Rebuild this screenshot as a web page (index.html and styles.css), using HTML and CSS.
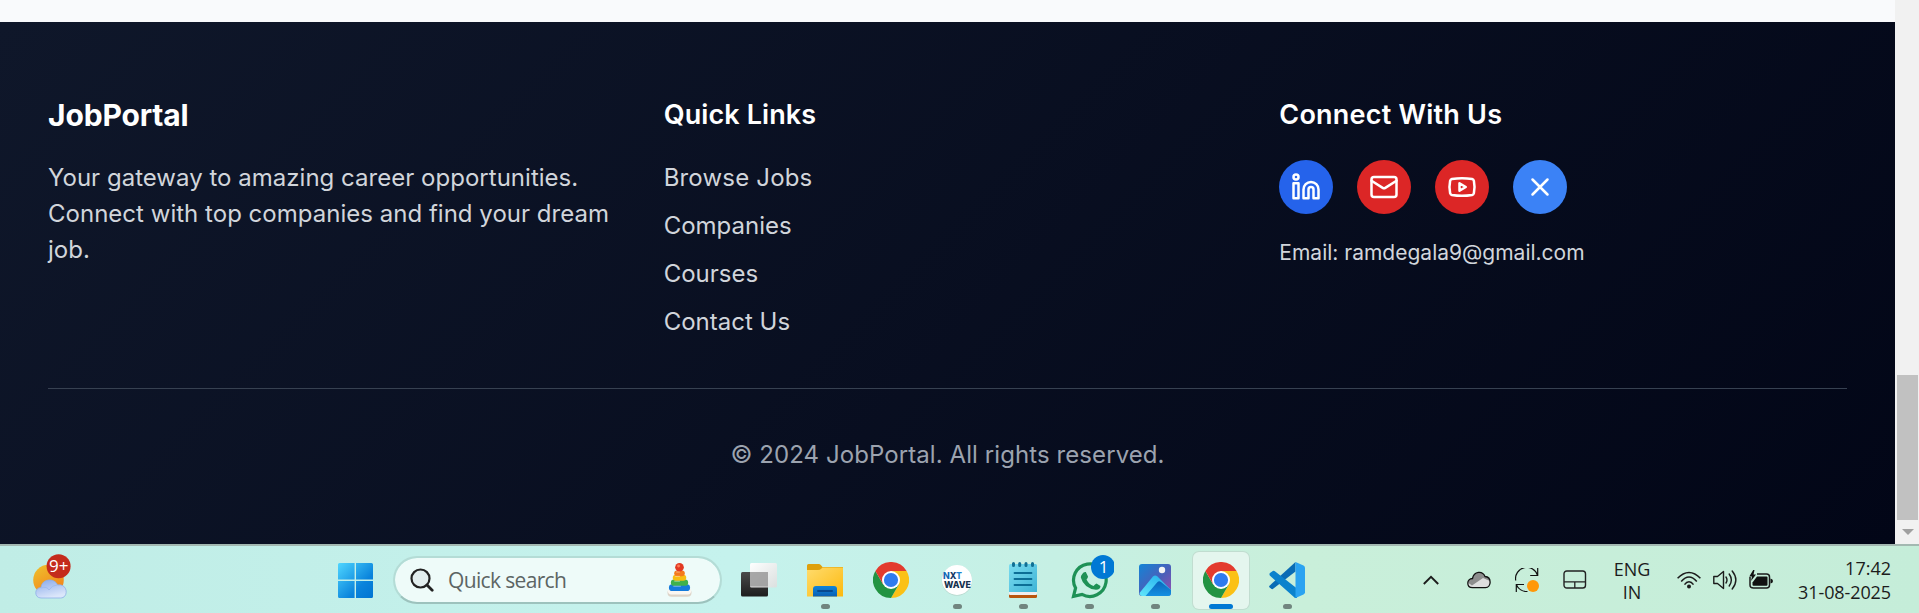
FILE: index.html
```html
<!DOCTYPE html>
<html lang="en">
<head>
<meta charset="utf-8">
<title>JobPortal</title>
<link rel="stylesheet" href="styles.css">
</head>
<body>
<svg class="defs" width="0" height="0" aria-hidden="true">
  <defs>
    <linearGradient id="sun" x1="0" y1="0" x2=".6" y2="1"><stop offset="0" stop-color="#eec32e"/><stop offset="1" stop-color="#f3831a"/></linearGradient>
    <linearGradient id="cloud" x1="0" y1="0" x2=".4" y2="1"><stop offset="0" stop-color="#88a9ea"/><stop offset="1" stop-color="#dbe6fa"/></linearGradient>
    <linearGradient id="win" gradientUnits="userSpaceOnUse" x1="0" y1="0" x2="35" y2="35"><stop offset="0" stop-color="#4fd6ff"/><stop offset=".65" stop-color="#0a84dc"/><stop offset="1" stop-color="#0074d2"/></linearGradient>
    <linearGradient id="dark" x1="0" y1="0" x2="0" y2="1"><stop offset="0" stop-color="#4a4a4a"/><stop offset="1" stop-color="#1d1d1d"/></linearGradient>
    <linearGradient id="light" x1="0" y1="0" x2="1" y2="1"><stop offset="0" stop-color="#fff" stop-opacity=".98"/><stop offset="1" stop-color="#dedede" stop-opacity=".9"/></linearGradient>
    <linearGradient id="folder" x1="0" y1="0" x2="1" y2="1"><stop offset="0" stop-color="#ffdc6e"/><stop offset="1" stop-color="#fcb90f"/></linearGradient>
    <linearGradient id="folderfront" x1="0" y1="0" x2="0" y2="1"><stop offset="0" stop-color="#0f84d8"/><stop offset="1" stop-color="#0a5fb2"/></linearGradient>
    <linearGradient id="note" x1="0" y1="0" x2="1" y2="1"><stop offset="0" stop-color="#7adcf0"/><stop offset="1" stop-color="#3fb4d6"/></linearGradient>
    <linearGradient id="sky" x1="0" y1="0" x2="1" y2="1"><stop offset="0" stop-color="#1384d6"/><stop offset=".55" stop-color="#4b5fb9"/><stop offset="1" stop-color="#9a4db0"/></linearGradient>
    <linearGradient id="hill" x1="0" y1="1" x2=".7" y2="0"><stop offset="0" stop-color="#62e6fb"/><stop offset="1" stop-color="#27b4ee"/></linearGradient>
    <linearGradient id="hill2" x1="0" y1="0" x2="0" y2="1"><stop offset="0" stop-color="#0a67bb"/><stop offset="1" stop-color="#1490e2"/></linearGradient>
    <symbol id="chrome" viewBox="0 0 36 36">
      <path fill="#fbc116" d="M18 9H33.6A18 18 0 0 1 18 36L25.8 22.5Z"/>
      <path fill="#229342" d="M18 36A18 18 0 0 1 2.4 9L10.2 22.5H25.8Z"/>
      <path fill="#e33b2e" d="M2.4 9A18 18 0 0 1 33.6 9H18L10.2 22.5Z"/>
      <circle cx="18" cy="18" r="9" fill="#fff"/><circle cx="18" cy="18" r="7.1" fill="#2f7bee"/>
    </symbol>
  </defs>
</svg>

<div class="viewport">
  <div class="page">
    <footer class="footer">
      <div class="columns">
        <section>
          <h3 class="brand">JobPortal</h3>
          <p class="about">Your gateway to amazing career opportunities. Connect with top companies and find your dream job.</p>
        </section>
        <section>
          <h4 class="heading">Quick Links</h4>
          <ul class="links">
            <li class="browse">Browse Jobs</li><li>Companies</li><li>Courses</li><li>Contact Us</li>
          </ul>
        </section>
        <section>
          <h4 class="heading heading-connect">Connect With Us</h4>
          <div class="social">
            <span class="dot blue"><svg viewBox="0 0 24 24"><path d="M16 8a6 6 0 0 1 6 6v7h-4v-7a2 2 0 0 0-4 0v7h-4v-7a6 6 0 0 1 6-6z"/><rect x="2" y="9" width="4" height="12"/><circle cx="4" cy="4" r="2"/></svg></span>
            <span class="dot red"><svg viewBox="0 0 24 24"><rect x="2" y="4" width="20" height="16" rx="2"/><path d="m22 7-8.97 5.7a1.94 1.94 0 0 1-2.06 0L2 7"/></svg></span>
            <span class="dot red"><svg viewBox="0 0 24 24"><path d="M2.5 17a24.12 24.12 0 0 1 0-10 2 2 0 0 1 1.4-1.4 49.56 49.56 0 0 1 16.2 0A2 2 0 0 1 21.5 7a24.12 24.12 0 0 1 0 10 2 2 0 0 1-1.4 1.4 49.55 49.55 0 0 1-16.2 0A2 2 0 0 1 2.5 17"/><path d="m10 15 5-3-5-3z"/></svg></span>
            <span class="dot sky"><svg viewBox="0 0 24 24"><path d="M18 6 6 18M6 6l12 12"/></svg></span>
          </div>
          <p class="email">Email: ramdegala9@gmail.com</p>
        </section>
      </div>
      <div class="legal">© 2024 JobPortal. All rights reserved.</div>
    </footer>
  </div>
  <div class="scrollbar"><div class="thumb"></div><svg class="arrow" viewBox="0 0 12 6"><path d="M0 0H12L6 6Z" fill="#a0a0a0"/></svg></div>
</div>

<div class="taskbar">
  <svg class="weather" viewBox="0 0 40 48">
    <circle cx="15.5" cy="26" r="15.3" fill="url(#sun)"/>
    <path d="M8 44C1 44 1 33.500 8 33.500C9 24 22 24 24.500 31C35 29 36 44 27.500 44Z" fill="url(#cloud)" stroke="#8eaee9" stroke-width=".8"/>
    <path d="M8 34Q14 32 16 36Q19 31 24 31" fill="none" stroke="#9bb7ee" stroke-width=".8"/>
    <circle cx="25.600" cy="12.300" r="12" fill="#c42b1c"/>
    <text x="25.700" y="18" class="badge-text">9+</text>
  </svg>
  <svg class="start" viewBox="0 0 35 35"><path fill="url(#win)" d="M1.500 0H16.600V16.600H0V1.500Q0 0 1.500 0ZM18 0H33.500Q35 0 35 1.500V16.600H18ZM0 18H16.600V35H1.500Q0 35 0 33.500ZM18 18H35V33.500Q35 35 33.500 35H18Z"/></svg>
  <div class="search">
    <svg class="glass" viewBox="0 0 24 24"><circle cx="10.500" cy="10.500" r="9" fill="#e2eeee" stroke="#222" stroke-width="2.200"/><path d="M17 17L22.200 22.200" stroke="#222" stroke-width="2.800" stroke-linecap="round"/></svg>
    <span class="search-text">Quick search</span>
    <svg class="toy" viewBox="0 0 26 36">
      <rect x=".5" y="27" width="25" height="8.500" rx="4.200" fill="#ddd4c8"/><rect x="1" y="26.500" width="24" height="6.500" rx="3.200" fill="#fbf7f2"/>
      <rect x="2" y="22.500" width="22" height="7" rx="3.500" fill="#157bdc"/>
      <rect x="4" y="17.500" width="18" height="6.500" rx="3.200" fill="#3fb14c"/>
      <rect x="6" y="12.500" width="14" height="6.300" rx="3.100" fill="#f7bd12"/>
      <rect x="7.500" y="8" width="11" height="6" rx="3" fill="#f47a1c"/>
      <circle cx="13" cy="4.700" r="4.500" fill="#e23a23"/><circle cx="12" cy="3.500" r="1.500" fill="#ff7b57"/>
      <path d="M7 24.500h7M8 19.300h5M9 14.200h4M10 9.700h3" stroke="#fff" stroke-opacity=".45" stroke-linecap="round"/>
    </svg>
  </div>
  <div class="apps">
    <div class="app"><svg viewBox="0 0 36 36"><rect x="0" y="10" width="27" height="24.500" rx="1.500" fill="url(#dark)"/><rect x="9" y="1" width="27" height="24.500" rx="1.500" fill="url(#light)"/><path d="M9 10H27V24.500H9Z" fill="#9a9a9a" fill-opacity=".85"/></svg></div>
    <div class="app running"><svg viewBox="0 0 36 36"><path d="M0 3.500Q0 2 1.500 2H11.500Q13 2 14 3.300L15.500 5H36V9H0Z" fill="#dfa00c"/><path d="M0 8H11Q13 8 14.500 6.500L15.500 5.500H36V34.500H0Z" fill="url(#folder)"/><path d="M6 34.500V27Q6 24 9 24H27Q30 24 30 27V34.500Z" fill="url(#folderfront)"/><path d="M11 29H25" stroke="#07498f" stroke-width="2" stroke-linecap="round"/></svg></div>
    <div class="app"><svg><use href="#chrome"/></svg></div>
    <div class="app running"><svg viewBox="0 0 36 36"><circle cx="18" cy="18.500" r="15.200" fill="#b8d8ce"/><circle cx="18" cy="18" r="15" fill="#fff"/><text x="4" y="17" class="nxt" textLength="19" lengthAdjust="spacingAndGlyphs"><tspan fill="#1268b5">N</tspan><tspan fill="#173a66">X</tspan><tspan fill="#1c83cf">T</tspan></text><text x="5" y="26.200" class="wave" textLength="27" lengthAdjust="spacingAndGlyphs">WAVE</text></svg></div>
    <div class="app running"><svg viewBox="0 0 36 36"><rect x="4" y="29" width="28" height="7" rx="1.500" fill="#b9560e"/><rect x="4" y="28" width="28" height="5" rx="1" fill="#f0eeee"/><path d="M5.500 2H30.500Q32 2 32 3.500V30H4V3.500Q4 2 5.500 2Z" fill="url(#note)"/><path d="M9.500 11H26.500M9.500 17H26.500M9.500 23H26.500" stroke="#0c6e96" stroke-width="1.800" stroke-linecap="round"/><path d="M8.500 1.500V3.500M14.700 1.500V3.500M21 1.500V3.500M27.500 1.500V3.500" stroke="#126f94" stroke-width="3" stroke-linecap="round"/></svg></div>
    <div class="app running"><svg class="wa" viewBox="0 0 44 46"><path d="M3.500 43.400L5.600 35A16.300 16.300 0 1 1 12 41.400Z" fill="none" stroke="#1e9156" stroke-width="3.200"/><path d="M12 21.500Q13 18.500 15.800 19L18 23.500Q18 25 16.500 26.500Q19 31.500 23.500 33Q25 31 26.500 30.500L30.500 33Q30.500 36.500 26 36.800Q14 35.500 10.800 24.500Q10.800 22.500 12 21.500Z" fill="#1e9156"/><circle cx="33" cy="14" r="12" fill="#0078d4"/><text x="33.500" y="20" class="badge-text">1</text></svg></div>
    <div class="app running"><svg viewBox="0 0 36 36"><rect x="2" y="2" width="32" height="32" rx="3" fill="url(#sky)"/><path d="M2.500 31L16 14.500Q18 12.500 20.500 14.500L33.500 27.500V31Q33.500 34 31 34H5Q3 34 2.500 31Z" fill="url(#hill)"/><path d="M9 33.500L20.500 20Q22 18.500 24 20L34 28V31Q34 34 31 34H8.500Z" fill="url(#hill2)"/><circle cx="25" cy="8" r="3.200" fill="#f3f3f5"/></svg></div>
    <div class="app active"><svg><use href="#chrome"/></svg></div>
    <div class="app running"><svg viewBox="0 0 36 36"><path d="M26.500 0L0 24.200Q0 26 3.500 27.200L26.500 9.500Z" fill="#0a6cb5"/><path d="M1 11L3.800 9Q5 8.500 6.200 9.500L28 26.500V36H26L.800 13.500Q0 12 1 11Z" fill="#0b82cd"/><path d="M26.500 0L34.500 3.500Q36 4.200 36 5.800V30.200Q36 31.800 34.500 32.500L26.500 36Z" fill="#2ba3f1"/></svg></div>
  </div>
  <div class="tray">
    <svg class="chev" viewBox="0 0 16 10"><path d="M.8 9L8 1.800L15.200 9" fill="none" stroke="#1c1c1c" stroke-width="1.900"/></svg>
    <svg class="drive" viewBox="0 0 24 18"><path d="M5.500 16.700C-1 16.500-.5 7.500 5.500 7.500C7 0 15.500-.5 18 5.500C25 6 24.500 16.500 18.500 16.700Z" fill="#dedede"/><path d="M1.500 12Q1 8 5.500 7.500C7 0 15.500-.5 18 5.500Q22 6 22.800 10L16 7L5 14.500Z" fill="#8d8d8d"/><path d="M5.500 16.700C-1 16.500-.5 7.500 5.500 7.500C7 0 15.500-.5 18 5.500C25 6 24.500 16.500 18.500 16.700Z" fill="none" stroke="#111" stroke-width="1.300"/></svg>
    <svg class="sync" viewBox="0 0 24 24"><path d="M.7 12.500A11.300 11.300 0 0 1 22.700 7.500M22.700 0V7.500H15.200M12.500 23.500A11.300 11.300 0 0 1 1.300 16.500M9 16.500H1.300V24" fill="none" stroke="#111" stroke-width="1.200"/><circle cx="18" cy="18" r="6" fill="#ff9808"/></svg>
    <svg class="pad" viewBox="0 0 24 20"><rect x="1" y="1" width="21.500" height="17" rx="2.800" fill="none" stroke="#222" stroke-width="1.400"/><path d="M1 11.800H22.500M11.800 11.800V18" stroke="#222" stroke-width="1.300"/></svg>
    <div class="lang">ENG<br>IN</div>
    <svg class="wifi" viewBox="0 0 24 18"><g fill="none" stroke="#1c1c1c" stroke-width="1.500"><path d="M.6 7.200Q6 1.400 12 1.400T23.400 7.200"/><path d="M4.200 10.500Q8 6 12 6T19.800 10.500"/><path d="M7.500 13.700Q9.500 10.700 12 10.700T16.500 13.700"/></g><circle cx="12" cy="15.500" r="2" fill="#1c1c1c"/></svg>
    <svg class="speaker" viewBox="0 0 24 20"><g fill="none" stroke="#1c1c1c" stroke-width="1.400" stroke-linejoin="round"><path d="M.8 6.500H4.500L10.500 1.500V18.500L4.500 13.500H.8Z"/><path d="M13 7Q15 10 13 13M16.200 4Q20.500 10 16.200 16M19.200 1Q26.500 10 19.200 19" stroke-linecap="round"/></g></svg>
    <svg class="battery" viewBox="0 0 24 20"><path d="M8 4H17.500Q20.500 4 20.500 7V15Q20.500 18 17.500 18H4.500Q1 18 1 15V7" fill="none" stroke="#1c1c1c" stroke-width="1.500"/><path d="M8 6.500H17.500Q18.500 6.500 18.500 7.500V14.500Q18.500 15.700 17.500 15.700H4.500Q3.500 15.700 3.500 14.500V12.500Z" fill="#111"/><path d="M21.500 8.500Q24 9 24 11T21.500 13.500Z" fill="#111"/><path d="M4.200 0L.3 6.500H3L2 11L7 4.500H4.500L5.500 0Z" fill="#111"/></svg>
    <div class="clock"><span class="time">17:42</span><span class="date">31-08-2025</span></div>
  </div>
</div>
</body>
</html>
```
FILE: styles.css
```css
* { box-sizing: border-box; margin: 0; padding: 0; }
body { width: 1919px; height: 613px; overflow: hidden; background: #f9fafb; font-family: Inter, sans-serif; }
svg { display: block; flex: none; }
.defs { position: absolute; }

.viewport { display: flex; height: 544px; overflow: hidden; }
.page { width: 1895px; padding-top: 22px; background: #f9fafc; }
.footer { height: 523px; padding: 72px 48px; background: linear-gradient(135deg, #0f172a, #020617); color: #fff; }
.columns { display: grid; grid-template-columns: repeat(3, 1fr); gap: 48px; }
.brand { font-size: 30px; line-height: 42px; font-weight: 700; letter-spacing: -.15px; }
.heading { font-size: 27px; line-height: 42px; font-weight: 600; letter-spacing: .1px; }
.heading-connect { letter-spacing: .22px; }
.about { margin-top: 24px; letter-spacing: .02px; }
.about, .links, .legal { font-size: 24px; line-height: 36px; color: #d1d5db; }
.links { margin-top: 24px; display: grid; gap: 12px; list-style: none; }
.browse { letter-spacing: .18px; }
.social { display: flex; gap: 24px; margin-top: 24px; }
.dot { display: grid; place-items: center; width: 54px; height: 54px; border-radius: 50%; }
.dot svg { width: 30px; height: 30px; fill: none; stroke: #fff; stroke-width: 2; stroke-linecap: round; stroke-linejoin: round; }
.blue { background: #2563eb; }
.red { background: #dc2626; }
.sky { background: #3b82f6; }
.email { margin-top: 24px; font-size: 21px; line-height: 30px; color: #d1d5db; }
.legal { margin-top: 48px; padding-top: 48px; border-top: 1px solid #374151; text-align: center; color: #9ca3af; letter-spacing: .08px; }

.scrollbar { width: 24px; padding: 375px 1px 0 2px; background: #f1f1f1; }
.thumb { height: 145px; background: #c1c1c1; }
.arrow { width: 12px; height: 6px; margin: 9px auto 0; }

.taskbar { display: flex; align-items: flex-start; height: 69px; border-top: 2px solid #a3b8b1; background: linear-gradient(90deg, #c0ede6, #c5f2ed 38%, #c6f0e4 55%, #c9efda 68%, #c5edd9); font-family: "Open Sans", "Noto Sans", sans-serif; color: #1c1c1c; }
.weather { width: 40px; height: 48px; margin: 8px 0 0 33px; }
.badge-text { font: 17px "Open Sans", sans-serif; fill: #fff; text-anchor: middle; }
.start { width: 35px; height: 35px; margin: 17px 0 0 265px; }
.search { display: flex; align-items: center; width: 329px; height: 48px; margin: 10px 0 0 20px; padding: 0 28px 0 15px; border: 2px solid #b4dcd6; border-bottom-color: #9dc2bd; border-radius: 24px; background: #eefbf9; background-clip: padding-box; }
.glass { width: 24px; height: 24px; }
.search-text { margin-left: 14px; font-size: 21px; line-height: 30px; color: #5c6564; letter-spacing: -.65px; }
.toy { width: 25px; height: 36px; margin-left: auto; }
.apps { display: flex; margin: 6px 0 0 4px; }
.app { position: relative; width: 56px; height: 57px; margin: 0 5px; padding: 10px; border-radius: 6px; }
.app svg { width: 36px; height: 36px; }
.app .wa { width: 44px; height: 46px; margin: -9px 0 0 -1px; }
.running::after, .active::after { content: ""; position: absolute; left: 24px; bottom: 0; width: 9px; height: 5px; border-radius: 3px; background: #71857f; }
.active { background: #e4f6ee; box-shadow: 0 0 0 1px #c1ddd0; }
.active::after { left: 16px; width: 24px; background: #0078d4; }
.tray { display: flex; flex: 1; height: 67px; align-items: center; padding: 1px 28px 0 103px; }
.chev { width: 16px; height: 10px; }
.drive { width: 24px; height: 18px; margin-left: 28px; }
.sync { width: 24px; height: 24px; margin-left: 24px; }
.pad { width: 24px; height: 20px; margin-left: 24px; }
.lang { width: 60px; margin: 2px 0 0 15px; font-size: 18px; line-height: 23px; text-align: center; }
.wifi { width: 24px; height: 18px; margin-left: 15px; }
.speaker { width: 24px; height: 20px; margin-left: 12px; }
.battery { width: 24px; height: 20px; margin-left: 12px; }
.clock { display: grid; margin: -1px 0 0 auto; font-size: 18px; line-height: 24px; text-align: right; }
.date { letter-spacing: -.1px; }
.nxt { font: 800 9px Inter, sans-serif; }
.wave { font: 800 8.500px Inter, sans-serif; fill: #15324f; }
```
